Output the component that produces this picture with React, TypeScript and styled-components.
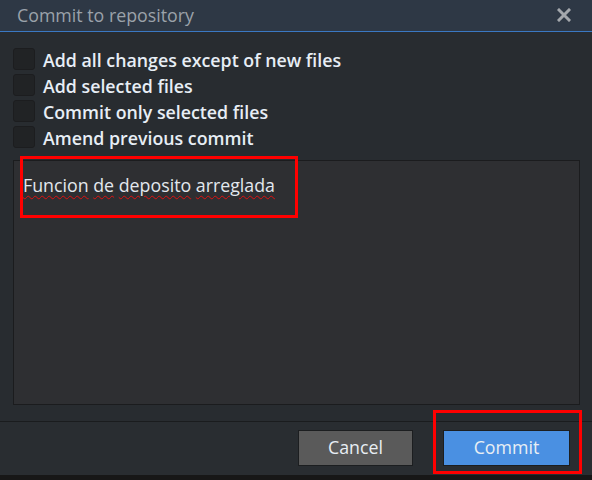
import styled, { createGlobalStyle } from 'styled-components';

const GlobalStyle = createGlobalStyle`
    html, body {
        margin: 0;
        padding: 0;
        background: #181818;
    }
    * {
        box-sizing: border-box;
    }
`;

const Dialog = styled.div`
    position: relative;
    width: 592px;
    height: 480px;
    display: flex;
    flex-direction: column;
    background: #282c30;
    font-family: 'Open Sans', 'Noto Sans', sans-serif;
    overflow: hidden;
`;

const TitleBar = styled.div`
    height: 32px;
    flex: none;
    display: flex;
    align-items: center;
    justify-content: space-between;
    padding: 0 21px 0 17px;
    background: #2e3845;
    border-bottom: 1px solid #3a78c2;
`;

const Title = styled.div`
    font-size: 17.8px;
    color: #9ba2aa;
    margin-top: -2px;
`;

const CloseButton = styled.button`
    width: 14px;
    height: 14px;
    padding: 0;
    border: none;
    background: none;
    display: flex;
    margin-top: -2px;
`;

const Body = styled.div`
    flex: 1;
    display: flex;
    flex-direction: column;
    padding: 16px 12px 16px 13px;
`;

const Options = styled.div`
    display: flex;
    flex-direction: column;
    gap: 4px;
`;

const OptionRow = styled.label`
    display: flex;
    align-items: center;
    gap: 8px;
    height: 22px;
`;

const CheckBox = styled.span`
    width: 22px;
    height: 22px;
    flex: none;
    border-radius: 3px;
    background: #212325;
    border: 1px solid #1c1d1f;
`;

const OptionLabel = styled.span`
    font-size: 17.8px;
    font-weight: 600;
    color: #e7eef5;
    margin-top: 1px;
`;

const MessageBox = styled.div`
    margin-top: 12px;
    height: 245px;
    background: #2e2f32;
    border: 1px solid #1b1c1e;
    padding: 12px 9px;
    font-size: 17.8px;
    color: #e3e8ee;
`;

const Misspelled = styled.span`
    text-decoration: underline wavy #e01010;
    text-decoration-thickness: 1px;
    text-underline-offset: 3px;
`;

const Footer = styled.div`
    flex: none;
    height: 54px;
    display: flex;
    align-items: flex-start;
    justify-content: flex-end;
    gap: 30px;
    padding: 8px 22px 0 0;
    border-top: 1px solid #1a1c1e;
    background: #292d31;
`;

const DialogButton = styled.button<{ $primary?: boolean }>`
    height: 36px;
    width: ${({ $primary }) => ($primary ? '127px' : '115px')};
    background: ${({ $primary }) => ($primary ? '#4a90e2' : '#5a5a5a')};
    border: 1px solid #1c1e20;
    color: #e8eef4;
    font-family: 'Open Sans', 'Noto Sans', sans-serif;
    font-size: 17.8px;
    padding: 0 0 2px;
`;

const BottomStrip = styled.div`
    flex: none;
    height: 5px;
    background: #171717;
`;

const Highlight = styled.div<{ $x: number; $y: number; $w: number; $h: number }>`
    position: absolute;
    left: ${({ $x }) => $x}px;
    top: ${({ $y }) => $y}px;
    width: ${({ $w }) => $w}px;
    height: ${({ $h }) => $h}px;
    border: 3px solid #ff0000;
    pointer-events: none;
`;

const options = [
    'Add all changes except of new files',
    'Add selected files',
    'Commit only selected files',
    'Amend previous commit',
];

const message = ['Funcion', 'de', 'deposito', 'arreglada'];

export default function App() {
    return (
        <>
            <GlobalStyle />
            <Dialog>
                <TitleBar>
                    <Title>Commit to repository</Title>
                    <CloseButton aria-label="Close">
                        <svg width="14" height="14" viewBox="0 0 14 14">
                            <path d="M2 2 L12 12 M12 2 L2 12" stroke="#a4a8ad" strokeWidth="3" strokeLinecap="square" />
                        </svg>
                    </CloseButton>
                </TitleBar>
                <Body>
                    <Options>
                        {options.map((text) => (
                            <OptionRow key={text}>
                                <CheckBox />
                                <OptionLabel>{text}</OptionLabel>
                            </OptionRow>
                        ))}
                    </Options>
                    <MessageBox>
                        {message.map((word, i) => (
                            <span key={word}>
                                {i > 0 && ' '}
                                <Misspelled>{word}</Misspelled>
                            </span>
                        ))}
                    </MessageBox>
                </Body>
                <Footer>
                    <DialogButton>Cancel</DialogButton>
                    <DialogButton $primary>Commit</DialogButton>
                </Footer>
                <BottomStrip />
                <Highlight $x={20} $y={156} $w={278} $h={62} />
                <Highlight $x={433} $y={410} $w={149} $h={64} />
            </Dialog>
        </>
    );
}
